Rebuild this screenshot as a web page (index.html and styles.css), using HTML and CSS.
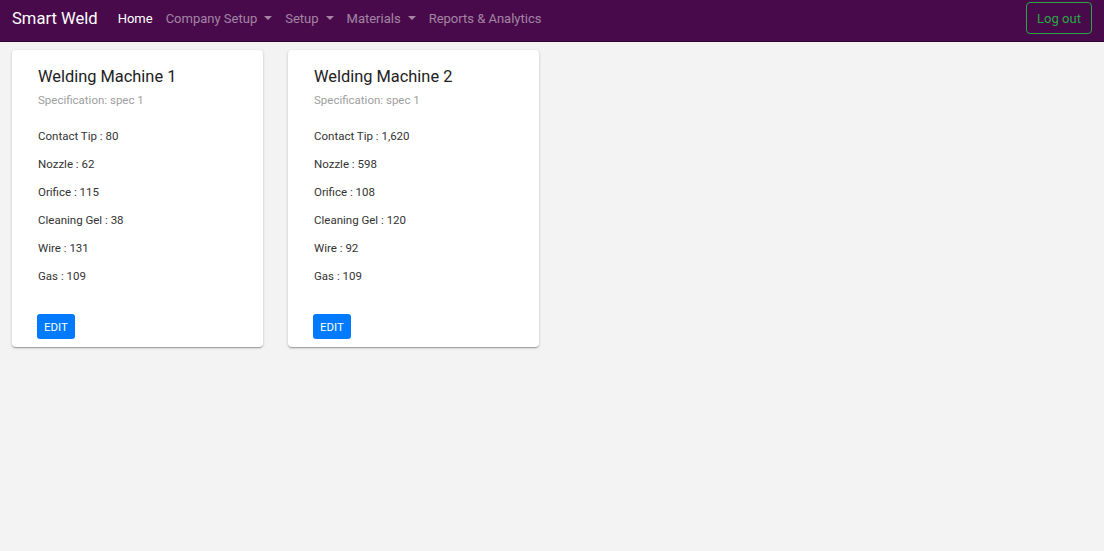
FILE: index.html
```html
<!DOCTYPE html>
<html>
<head>
<meta charset="utf-8">
<link rel="stylesheet" href="styles.css">
</head>
<body>
<nav class="navbar">
  <a class="brand">Smart Weld</a>
  <ul class="nav">
    <li class="nav-link active">Home</li>
    <li class="nav-link dropdown">Company Setup</li>
    <li class="nav-link dropdown">Setup</li>
    <li class="nav-link dropdown">Materials</li>
    <li class="nav-link">Reports &amp; Analytics</li>
  </ul>
  <button class="logout">Log out</button>
</nav>
<main class="cards">
  <section class="card">
    <h2 class="card-title">Welding Machine 1</h2>
    <p class="card-sub">Specification: spec 1</p>
    <ul class="items">
      <li>Contact Tip : 80</li>
      <li>Nozzle : 62</li>
      <li>Orifice : 115</li>
      <li>Cleaning Gel : 38</li>
      <li>Wire : 131</li>
      <li>Gas : 109</li>
    </ul>
    <button class="edit">EDIT</button>
  </section>
  <section class="card">
    <h2 class="card-title">Welding Machine 2</h2>
    <p class="card-sub">Specification: spec 1</p>
    <ul class="items">
      <li>Contact Tip : 1,620</li>
      <li>Nozzle : 598</li>
      <li>Orifice : 108</li>
      <li>Cleaning Gel : 120</li>
      <li>Wire : 92</li>
      <li>Gas : 109</li>
    </ul>
    <button class="edit">EDIT</button>
  </section>
</main>
</body>
</html>
```

FILE: styles.css
```css
* { box-sizing: border-box; }
html, body { margin: 0; padding: 0; }
body {
  background: #f3f3f3;
  font-family: Roboto, "Liberation Sans", sans-serif;
  color: #212529;
  height: 551px;
}
.navbar {
  display: flex;
  align-items: center;
  height: 42px;
  padding: 0 12px 5px;
  background: #480a4a;
  border-bottom: 1px solid #2e062e;
}
.brand {
  color: #fff;
  font-size: 16.6px;
  margin-right: 13.5px;
}
.nav {
  display: flex;
  list-style: none;
  margin: 0;
  padding: 0;
  flex: 1;
}
.nav-link {
  font-size: 13px;
  color: rgba(255,255,255,0.5);
  padding: 0 6.5px;
}
.nav-link.active { color: #fff; }
.dropdown::after {
  content: "";
  display: inline-block;
  margin-left: 7px;
  vertical-align: 3px;
  border-top: 4px solid;
  border-left: 4px solid transparent;
  border-right: 4px solid transparent;
}
.logout {
  font-family: inherit;
  font-size: 13px;
  color: #28a745;
  background: transparent;
  border: 1px solid #28a745;
  border-radius: 4px;
  height: 32px;
  width: 66px;
  padding: 0;
  margin-right: 0;
}
.cards {
  display: flex;
  gap: 25px;
  padding: 8px 12px;
  align-items: flex-start;
}
.card {
  width: 251px;
  background: #fff;
  border-radius: 4px;
  box-shadow: 0 1px 3px rgba(0,0,0,0.2), 0 1px 1px rgba(0,0,0,0.14), 0 2px 1px -1px rgba(0,0,0,0.12);
  padding: 17px 26px 8px;
}
.card-title {
  margin: 0;
  font-size: 16.4px;
  font-weight: 400;
  line-height: 20px;
  color: #212121;
}
.card-sub {
  margin: 5px 0 0;
  font-size: 11.5px;
  line-height: 16px;
  color: #9e9e9e;
}
.items {
  list-style: none;
  margin: 20px 0 0;
  padding: 0;
}
.items li {
  font-size: 11.5px;
  line-height: 16px;
  margin-bottom: 12px;
  color: #333;
}
.edit {
  display: block;
  margin-top: 30px;
  margin-left: -1px;
  font-family: inherit;
  font-size: 11.5px;
  color: #fff;
  background: #007bff;
  border: none;
  border-radius: 3px;
  height: 25px;
  width: 38px;
  padding: 0;
}
```
